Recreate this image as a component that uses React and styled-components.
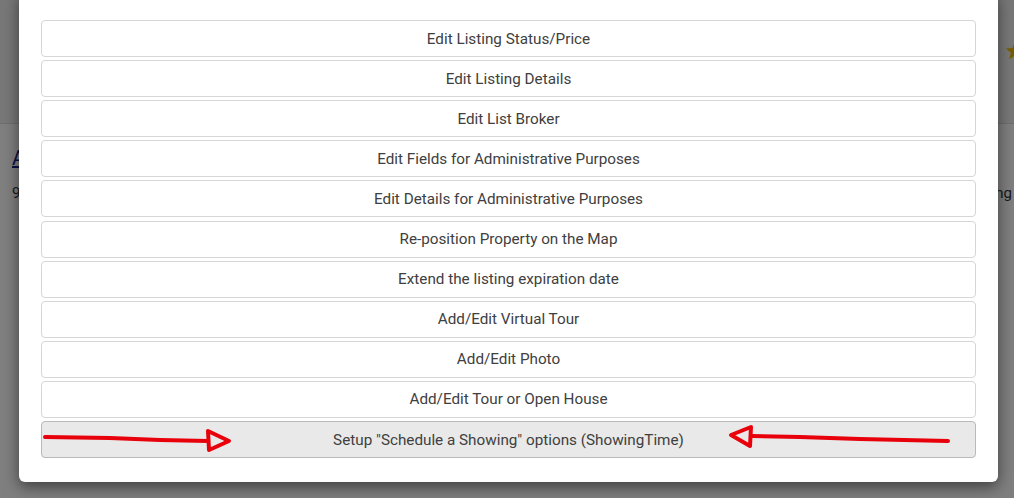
import React from "react";
import styled, { createGlobalStyle } from "styled-components";

const GlobalStyle = createGlobalStyle`
  html, body {
    margin: 0;
    padding: 0;
    height: 498px;
    overflow: hidden;
    background: #ffffff;
    font-family: Roboto, "Liberation Sans", Arial, sans-serif;
  }
`;

const Page = styled.div`
  position: relative;
  width: 1014px;
  height: 498px;
  overflow: hidden;
`;

const Header = styled.header`
  height: 124px;
  background: #f0f0f0;
  border-bottom: 1px solid #dcdcdc;
  display: flex;
  justify-content: flex-end;
  align-items: flex-start;
  padding-top: 40px;
  box-sizing: border-box;
`;

const Star = styled.svg`
  width: 22px;
  height: 22px;
  margin-right: -12px;
`;

const Content = styled.main`
  padding: 22px 2px 0 12px;
  display: flex;
  flex-direction: column;
  gap: 14px;
`;

const Link = styled.a`
  color: #1a1a8c;
  font-size: 20px;
  text-decoration: underline;
`;

const InfoRow = styled.div`
  display: flex;
  justify-content: space-between;
  font-size: 15px;
  color: #333;
`;

const Overlay = styled.div`
  position: absolute;
  inset: 0;
  background: rgba(0, 0, 0, 0.5);
  display: flex;
  justify-content: center;
  align-items: flex-end;
  padding: 0 0 16px 3px;
  box-sizing: border-box;
`;

const Modal = styled.div`
  width: 979px;
  box-sizing: border-box;
  background: #fff;
  border-radius: 6px;
  padding: 30px 22px 24px;
  box-shadow: 0 5px 15px rgba(0, 0, 0, 0.5);
  display: flex;
  flex-direction: column;
  gap: 3.1px;
`;

const ActionButton = styled.button`
  height: 37px;
  width: 100%;
  border-radius: 4px;
  border: 1px solid ${(p) => (p.$active ? "#b9b9b9" : "#d6d6d6")};
  background: ${(p) => (p.$active ? "#e9e9e9" : "#ffffff")};
  color: #404040;
  font-family: Roboto, "Liberation Sans", Arial, sans-serif;
  font-size: 15.25px;
  cursor: pointer;
  padding: 0;
`;

const Annotation = styled.svg`
  position: absolute;
  left: 0;
  top: 0;
  width: 1014px;
  height: 498px;
  pointer-events: none;
`;

const actions = [
  "Edit Listing Status/Price",
  "Edit Listing Details",
  "Edit List Broker",
  "Edit Fields for Administrative Purposes",
  "Edit Details for Administrative Purposes",
  "Re-position Property on the Map",
  "Extend the listing expiration date",
  "Add/Edit Virtual Tour",
  "Add/Edit Photo",
  "Add/Edit Tour or Open House",
  'Setup "Schedule a Showing" options (ShowingTime)',
];

const App = () => {
  return (
    <Page>
      <GlobalStyle />
      <Header>
        <Star viewBox="0 0 24 24">
          <path
            d="M12 2l2.9 6.6 7.1.6-5.4 4.7 1.6 7-6.2-3.7-6.2 3.7 1.6-7L2 9.2l7.1-.6z"
            fill="#f2b705"
          />
        </Star>
      </Header>
      <Content>
        <Link href="#">A</Link>
        <InfoRow>
          <span>9</span>
          <span>Listing</span>
        </InfoRow>
      </Content>

      <Overlay>
        <Modal>
          {actions.map((label, i) => (
            <ActionButton key={label} $active={i === actions.length - 1}>
              {label}
            </ActionButton>
          ))}
        </Modal>
        <Annotation viewBox="0 0 1014 498">
          <g
            stroke="#e8000b"
            strokeWidth="4"
            fill="none"
            strokeLinecap="round"
            strokeLinejoin="round"
          >
            <path d="M45 437 L110 438 L160 440 L208 441" />
            <path d="M208 431 L229 441 L209 450 Z" />
            <path d="M752 436 L800 437 L860 439 L948 441" />
            <path d="M751 427 L731 435 L750 446 Z" />
          </g>
        </Annotation>
      </Overlay>
    </Page>
  );
};

export default App;
